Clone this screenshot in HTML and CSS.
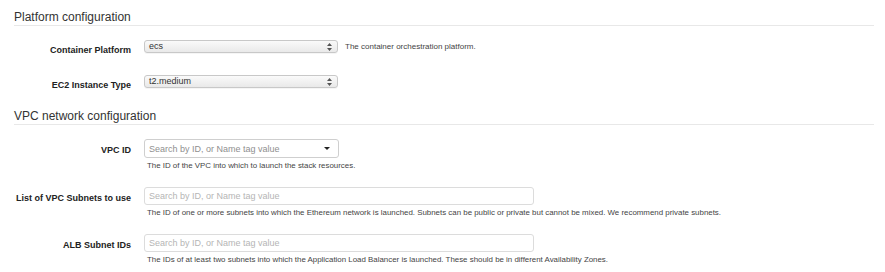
FILE: index.html
```html
<!DOCTYPE html>
<html lang="en">
<head>
  <meta charset="UTF-8">
  <meta name="viewport" content="width=device-width, initial-scale=1.0">
  <title>Stack parameters</title>
  <link rel="stylesheet" href="styles.css">
</head>
<body>

<section class="panel">
  <h2 class="panel-title">Platform configuration</h2>

  <div class="field field-first">
    <label class="field-label">Container Platform</label>
    <div class="inline">
      <div class="select">
        <span>ecs</span>
        <svg class="updown" width="5" height="8" viewBox="0 0 5 8"><path d="M2.5 0 L5 3 L0 3 Z M0 5 L5 5 L2.5 8 Z" fill="#555"/></svg>
      </div>
      <span class="desc">The container orchestration platform.</span>
    </div>
  </div>

  <div class="field">
    <label class="field-label">EC2 Instance Type</label>
    <div class="inline">
      <div class="select">
        <span>t2.medium</span>
        <svg class="updown" width="5" height="8" viewBox="0 0 5 8"><path d="M2.5 0 L5 3 L0 3 Z M0 5 L5 5 L2.5 8 Z" fill="#555"/></svg>
      </div>
    </div>
  </div>
</section>

<section class="panel panel-vpc">
  <h2 class="panel-title">VPC network configuration</h2>

  <div class="field field-first wide">
    <label class="field-label">VPC ID</label>
    <div>
      <div class="combo">
        <span class="combo-text">Search by ID, or Name tag value</span>
        <svg class="caret" width="6" height="3" viewBox="0 0 6 3"><path d="M0 0 L6 0 L3 3 Z" fill="#222"/></svg>
      </div>
      <p class="help">The ID of the VPC into which to launch the stack resources.</p>
    </div>
  </div>

  <div class="field wide">
    <label class="field-label">List of VPC Subnets to use</label>
    <div>
      <input class="text-input" type="text" placeholder="Search by ID, or Name tag value">
      <p class="help">The ID of one or more subnets into which the Ethereum network is launched. Subnets can be public or private but cannot be mixed. We recommend private subnets.</p>
    </div>
  </div>

  <div class="field wide">
    <label class="field-label">ALB Subnet IDs</label>
    <div>
      <input class="text-input" type="text" placeholder="Search by ID, or Name tag value">
      <p class="help">The IDs of at least two subnets into which the Application Load Balancer is launched. These should be in different Availability Zones.</p>
    </div>
  </div>
</section>

</body>
</html>
```

FILE: styles.css
```css
body {
  margin: 0;
  padding: 0 11px 0 14px;
  font-family: "Liberation Sans", Arial, sans-serif;
  color: #333;
  background: #fff;
}

.panel-title {
  margin: 10px 0 0;
  font-size: 12px;
  font-weight: normal;
  line-height: 15px;
  color: #333;
  border-bottom: 1px solid #e8e8e8;
}

.panel-vpc .panel-title {
  margin-top: 18px;
}

.field {
  display: grid;
  grid-template-columns: 117px 1fr;
  column-gap: 13px;
  align-items: start;
  margin-top: 19px;
}

.field-first {
  margin-top: 14px;
}

.field-label {
  text-align: right;
  font-size: 9px;
  font-weight: bold;
  line-height: 11px;
  padding-top: 5px;
  color: #222;
}

.wide {
  margin-top: 16px;
}
.wide.field-first {
  margin-top: 14px;
}
.wide .field-label {
  padding-top: 6px;
}

.inline {
  display: flex;
  align-items: center;
  gap: 7px;
}

.select {
  box-sizing: border-box;
  width: 194px;
  height: 13px;
  display: flex;
  align-items: center;
  justify-content: space-between;
  padding: 0 5px 0 4px;
  font-size: 9px;
  line-height: 11px;
  color: #333;
  border: 1px solid #c8c8c8;
  border-radius: 3px;
  background: linear-gradient(#fafafa, #e9e9e9);
  box-shadow: 0 1px 0 rgba(0, 0, 0, 0.04);
}

.desc {
  font-size: 8px;
  line-height: 10px;
  color: #444;
}

.combo {
  box-sizing: border-box;
  width: 195px;
  height: 19px;
  display: flex;
  align-items: center;
  justify-content: space-between;
  padding: 0 8px 0 4px;
  border: 1px solid #cfcfcf;
  border-radius: 3px;
  background: #fff;
}

.combo-text {
  font-size: 9px;
  color: #8f8f8f;
}

.text-input {
  display: block;
  box-sizing: border-box;
  width: 390px;
  height: 18px;
  margin: 0;
  padding: 0 4px;
  font-family: "Liberation Sans", Arial, sans-serif;
  font-size: 9px;
  color: #333;
  border: 1px solid #dcdcdc;
  border-radius: 3px;
  background: #fff;
  outline: none;
}

.text-input::placeholder {
  color: #b5b5b5;
}

.help {
  margin: 3px 0 0 3px;
  font-size: 7.9px;
  line-height: 10px;
  color: #444;
}
```
